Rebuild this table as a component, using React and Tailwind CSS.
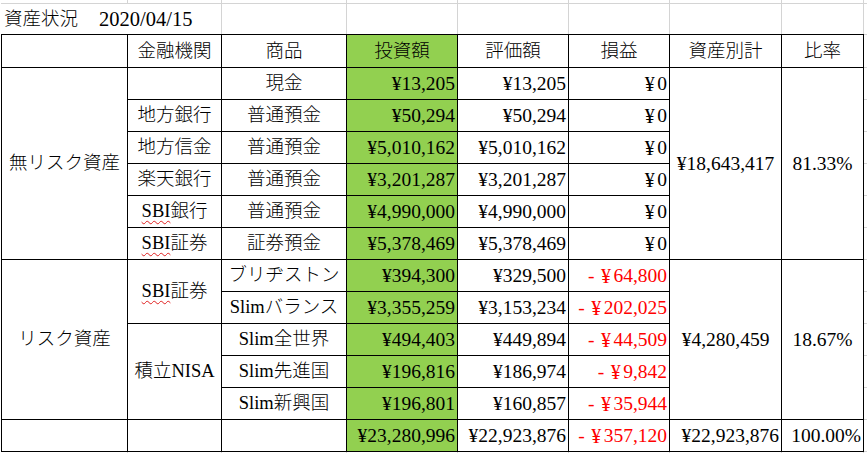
import React from "react";

const C = ({ c = "", children }) => (
  <div
    className={
      "flex items-center justify-center border-r border-b border-black text-[18.5px] leading-none whitespace-nowrap " +
      c
    }
  >
    {children}
  </div>
);

const N = ({ c = "", red = false, children }) => (
  <div
    className={
      "flex items-center justify-end pr-[2px] border-r border-b border-black text-[19.5px] leading-none whitespace-nowrap " +
      (red ? "text-[#ff0000] " : "") +
      c
    }
  >
    {children}
  </div>
);

const M = ({ c = "", children }) => (
  <div
    className={
      "flex items-center justify-center border-r border-b border-black text-[19.5px] leading-none whitespace-nowrap " +
      c
    }
  >
    {children}
  </div>
);

const Edge = ({ c = "" }) => <div className={"border-b border-[#d4d4d4] " + c} />;

const Sbi = ({ rest }) => (
  <>
    <span className="underline decoration-wavy decoration-[#e02020] decoration-1 underline-offset-[3px]">SBI</span>
    {rest}
  </>
);

const Yen = () => <span className="inline-block w-[15px] text-center text-[20px]">¥</span>;

const Zero = () => (
  <>
    <Yen />
    <span>0</span>
  </>
);

const Neg = ({ v }) => (
  <>
    <span className="mr-[4px]">-</span>
    <Yen />
    <span>{v}</span>
  </>
);

const GREEN = "bg-[#92d050]";

export default function App() {
  return (
    <div className="w-[867px] h-[453px] overflow-hidden bg-white pl-px text-black font-light font-['Liberation_Serif','Noto_Sans_CJK_JP',serif]">
      <div className="grid grid-cols-[127px_94px_125px_111px_111px_101px_112px_82px_1fr] grid-rows-[4px_30px_34px_repeat(12,32px)_4px]">
        {/* top strip */}
        <div className="border-r border-b border-[#d4d4d4]" />
        <div className="border-r border-b border-[#d4d4d4]" />
        <div className="border-r border-b border-[#d4d4d4]" />
        <div className="border-r border-b border-[#d4d4d4]" />
        <div className="border-r border-b border-[#d4d4d4]" />
        <div className="border-r border-b border-[#d4d4d4]" />
        <div className="border-r border-b border-[#d4d4d4]" />
        <div className="border-r border-b border-[#d4d4d4]" />
        <div className="border-b border-[#d4d4d4]" />

        {/* title row */}
        <div className="col-span-2 flex items-center pl-[3px] border-r border-[#d4d4d4] whitespace-nowrap">
          <span className="text-[18.5px] leading-none">資産状況</span>
          <span className="text-[20.5px] leading-none ml-[21px]">2020/04/15</span>
        </div>
        <div className="border-r border-[#d4d4d4]" />
        <div className="border-r border-[#d4d4d4]" />
        <div className="border-r border-[#d4d4d4]" />
        <div className="border-r border-[#d4d4d4]" />
        <div className="border-r border-[#d4d4d4]" />
        <div className="border-r border-[#d4d4d4]" />
        <div />

        {/* header */}
        <C c="border-t border-l" />
        <C c="border-t">金融機関</C>
        <C c="border-t">商品</C>
        <C c={"border-t " + GREEN}>投資額</C>
        <C c="border-t">評価額</C>
        <C c="border-t">損益</C>
        <C c="border-t">資産別計</C>
        <C c="border-t">比率</C>
        <Edge c="border-t" />

        {/* row 2 */}
        <C c="border-l row-span-6">無リスク資産</C>
        <C />
        <C>現金</C>
        <N c={GREEN}>¥13,205</N>
        <N>¥13,205</N>
        <N><Zero /></N>
        <M c="row-span-6">¥18,643,417</M>
        <M c="row-span-6">81.33%</M>
        <Edge />

        {/* row 3 */}
        <C>地方銀行</C>
        <C>普通預金</C>
        <N c={GREEN}>¥50,294</N>
        <N>¥50,294</N>
        <N><Zero /></N>
        <Edge />

        {/* row 4 */}
        <C>地方信金</C>
        <C>普通預金</C>
        <N c={GREEN}>¥5,010,162</N>
        <N>¥5,010,162</N>
        <N><Zero /></N>
        <Edge />

        {/* row 5 */}
        <C>楽天銀行</C>
        <C>普通預金</C>
        <N c={GREEN}>¥3,201,287</N>
        <N>¥3,201,287</N>
        <N><Zero /></N>
        <Edge />

        {/* row 6 */}
        <C><Sbi rest="銀行" /></C>
        <C>普通預金</C>
        <N c={GREEN}>¥4,990,000</N>
        <N>¥4,990,000</N>
        <N><Zero /></N>
        <Edge />

        {/* row 7 */}
        <C><Sbi rest="証券" /></C>
        <C>証券預金</C>
        <N c={GREEN}>¥5,378,469</N>
        <N>¥5,378,469</N>
        <N><Zero /></N>
        <Edge />

        {/* row 8 */}
        <C c="border-l row-span-5">リスク資産</C>
        <C c="row-span-2"><Sbi rest="証券" /></C>
        <C>ブリヂストン</C>
        <N c={GREEN}>¥394,300</N>
        <N>¥329,500</N>
        <N red><Neg v="64,800" /></N>
        <M c="row-span-5">¥4,280,459</M>
        <M c="row-span-5">18.67%</M>
        <Edge />

        {/* row 9 */}
        <C>Slimバランス</C>
        <N c={GREEN}>¥3,355,259</N>
        <N>¥3,153,234</N>
        <N red><Neg v="202,025" /></N>
        <Edge />

        {/* row 10 */}
        <C c="row-span-3">積立NISA</C>
        <C>Slim全世界</C>
        <N c={GREEN}>¥494,403</N>
        <N>¥449,894</N>
        <N red><Neg v="44,509" /></N>
        <Edge />

        {/* row 11 */}
        <C>Slim先進国</C>
        <N c={GREEN}>¥196,816</N>
        <N>¥186,974</N>
        <N red><Neg v="9,842" /></N>
        <Edge />

        {/* row 12 */}
        <C>Slim新興国</C>
        <N c={GREEN}>¥196,801</N>
        <N>¥160,857</N>
        <N red><Neg v="35,944" /></N>
        <Edge />

        {/* row 13 total */}
        <C c="border-l" />
        <C />
        <C />
        <N c={GREEN}>¥23,280,996</N>
        <N>¥22,923,876</N>
        <N red><Neg v="357,120" /></N>
        <N>¥22,923,876</N>
        <N>100.00%</N>
        <Edge />

        {/* bottom strip */}
        <div className="border-r border-[#d4d4d4]" />
        <div className="border-r border-[#d4d4d4]" />
        <div className="border-r border-[#d4d4d4]" />
        <div className="border-r border-[#d4d4d4]" />
        <div className="border-r border-[#d4d4d4]" />
        <div className="border-r border-[#d4d4d4]" />
        <div className="border-r border-[#d4d4d4]" />
        <div className="border-r border-[#d4d4d4]" />
        <div />
      </div>
    </div>
  );
}
